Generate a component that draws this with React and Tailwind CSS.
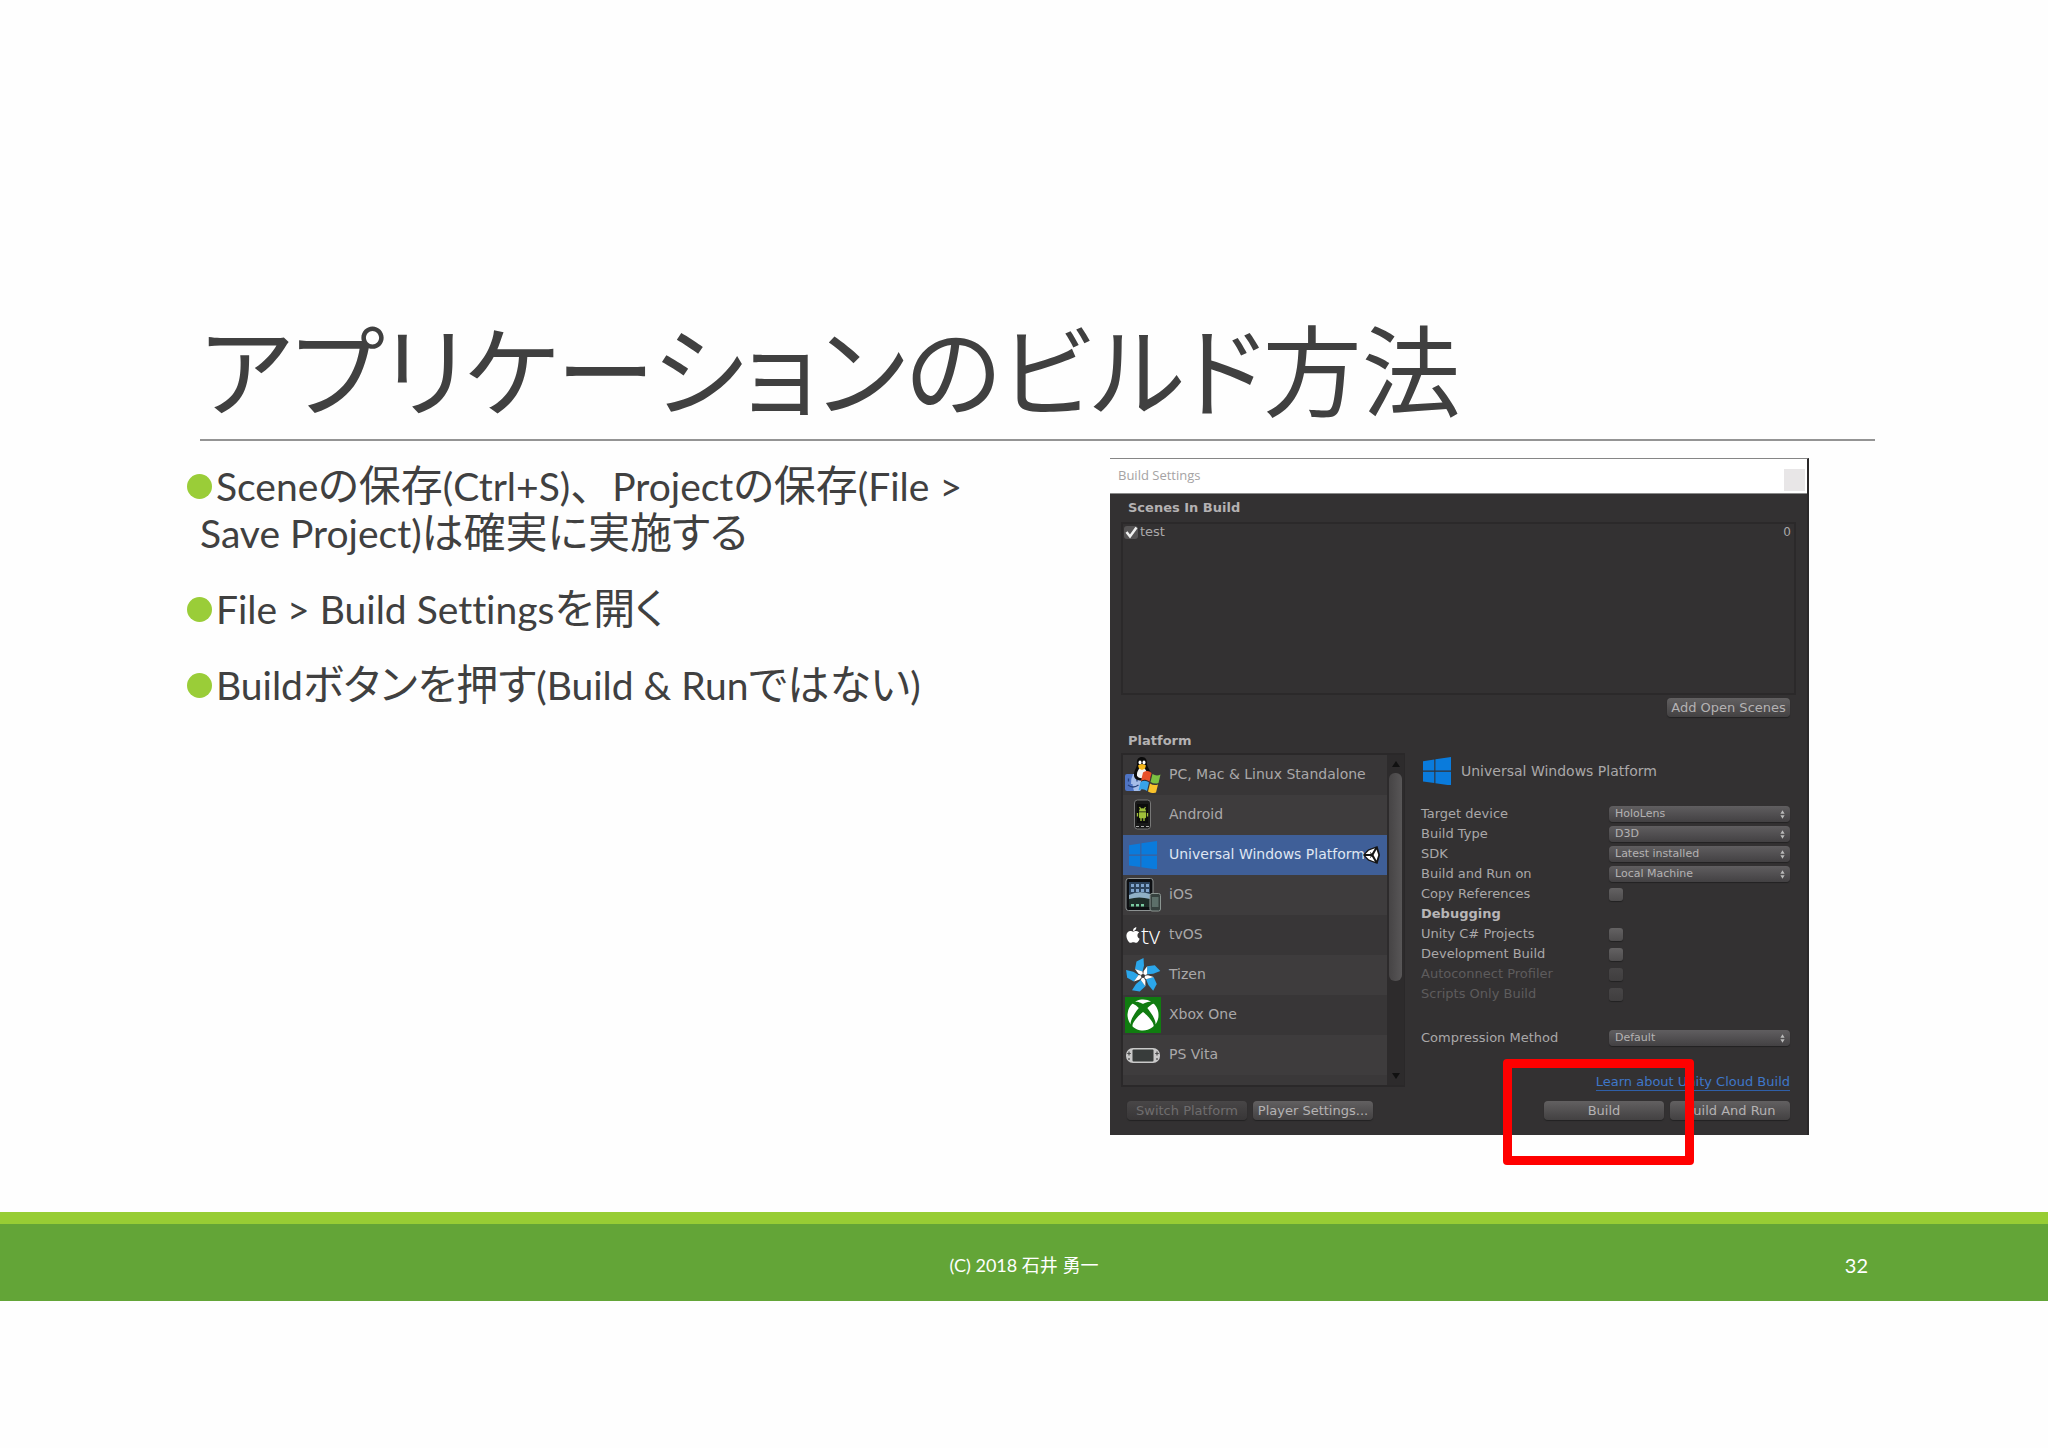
import React from "react";
import { FaApple, FaXbox } from "react-icons/fa";

const latin = "font-['Lato','Noto_Sans_CJK_JP',sans-serif]";
const unity = "font-['DejaVu_Sans','Noto_Sans_CJK_JP',sans-serif]";

function Jp({ children, wide }) {
  return (
    <span
      className={`font-['Noto_Sans_CJK_JP',sans-serif] text-[42px] leading-none ${
        wide ? "[font-feature-settings:normal]" : "[font-feature-settings:'palt']"
      }`}
    >
      {children}
    </span>
  );
}

function WindowsLogo({ className }) {
  return (
    <svg viewBox="0 0 28 28" className={className} fill="#0a7bdc" aria-hidden="true">
      <path d="M0 4.2 11.3 2.4V13.6H0zM12.4 2.2 28 0V13.6H12.4zM0 14.7H11.3V26L0 24.4zM12.4 14.7H28V28.5L12.4 26.2z" />
    </svg>
  );
}

function DesktopIcon() {
  return (
    <svg viewBox="0 0 36 36" className="h-9 w-9" aria-hidden="true">
      <rect x="0" y="17" width="16" height="17" rx="2" fill="#4f74c4" />
      <path d="M8 17h6a2 2 0 0 1 2 2v13a2 2 0 0 1-2 2H9q-1.500-5-1.500-7H6Q6 21 8 17z" fill="#a5bce8" />
      <path d="M3.500 21.500v3M12 21.500v3M3 28q5 4 10.500 0" stroke="#24407c" strokeWidth="1.300" fill="none" />
      <path d="M17 0c-4 0-5.500 3-5 7 .2 3-3 6-3 11 0 4 3 5.500 8 5.500s9-1 9-5c0-5-4-8-4-11.500C22 3 21 0 17 0z" fill="#0a0a0a" />
      <path d="M16.500 9.500c-2 1-5 5-4.500 9 .4 3 8 4 10 0 1-4-2.500-8-5.500-9z" fill="#f2f2f2" />
      <ellipse cx="15" cy="5.500" rx="1.500" ry="2" fill="#fff" />
      <ellipse cx="19" cy="5.500" rx="1.500" ry="2" fill="#fff" />
      <path d="M13 8.500q4-3 8 0l-1 3-3 1.500-3-1.500z" fill="#f6b81a" />
      <path d="M18 15.500q5-3 8.500.5l-2 8.500q-4-3-8.500-.5z" fill="#e8502a" />
      <path d="M27.500 17q4 2.500 8 .5l-2 8.500q-4 1.500-8-1z" fill="#7cc142" />
      <path d="M15.500 25q4.500-2.500 8.500.5l-2 8.500q-4-3-8.500-.5z" fill="#38a3e8" />
      <path d="M25 26.500q4 2.500 8 1l-2 8q-4 1.500-8-1z" fill="#f9c22b" />
    </svg>
  );
}

function AndroidIcon() {
  return (
    <svg viewBox="0 0 36 36" className="h-9 w-9" aria-hidden="true">
      <rect x="9.500" y="3" width="16" height="29" rx="3" fill="#191919" stroke="#777" />
      <rect x="12" y="7" width="11" height="19" fill="#0c0c0c" />
      <path d="M14 14.500a3.500 3.200 0 0 1 7 0zM14 15.300h7v5a1 1 0 0 1-1 1h-5a1 1 0 0 1-1-1z" fill="#a0c03a" />
      <path d="M12.500 16v3.500M22.500 16v3.500M16 21v3M19 21v3M14.500 10l1.200 2M20.500 10l-1.200 2" stroke="#a0c03a" strokeWidth="1.300" />
      <path d="M11 29.500h3M16 29.500h3M21 29.500h3" stroke="#aaa" />
    </svg>
  );
}

function IosIcon() {
  return (
    <svg viewBox="0 0 36 36" className="h-9 w-9" aria-hidden="true">
      <rect x="1" y="1.500" width="27" height="32" rx="2.500" fill="#0d0f12" stroke="#8d9292" />
      <rect x="4" y="5" width="21" height="25" fill="#2c435c" />
      <path d="M4 18q10-5 21-1v7H4z" fill="#8fb0c6" />
      <path d="M4 22q10-3 21 0v8H4z" fill="#1d2c28" />
      <g fill="#7fa4cc">
        <path d="M6 7h3v3H6zM11 7h3v3h-3zM16 7h3v3h-3zM21 7h3v3h-3zM6 12h3v3H6zM11 12h3v3h-3zM16 12h3v3h-3zM21 12h3v3h-3z" />
      </g>
      <path d="M6 27h3v2.500H6zM11 27h3v2.500h-3zM16 27h3v2.500h-3z" fill="#79c9a0" />
      <rect x="25" y="16.500" width="10.500" height="17.500" rx="2" fill="#36413e" stroke="#8b9591" />
      <rect x="27" y="20" width="6.500" height="10" fill="#5c6f69" />
    </svg>
  );
}

function TvosIcon() {
  return (
    <span className="flex h-9 w-9 items-center text-white" aria-hidden="true">
      <FaApple className="h-[18px] w-4 shrink-0" />
      <span className="font-['Open_Sans',sans-serif] text-2xl leading-none font-light">tv</span>
    </span>
  );
}

function TizenIcon() {
  return (
    <svg viewBox="0 0 36 36" className="h-9 w-9" aria-hidden="true">
      {[0, 72, 144, 216, 288].map((a) => (
        <g key={a} transform={`rotate(${a} 18 19)`}>
          <path d="M18.500 1 11.500 4.500 10 12l7.500 2.500 1.500-6z" fill="#2ba6ea" />
          <path d="M10 12l3.500 4.800L18 19l-.5-4.500z" fill="#fff" />
        </g>
      ))}
      <circle cx="18" cy="19" r="2" fill="#383637" />
    </svg>
  );
}

function XboxIcon() {
  return (
    <span className="flex h-9 w-9 items-center justify-center bg-[#107c10]" aria-hidden="true">
      <FaXbox className="h-8 w-8 text-white" />
    </span>
  );
}

function VitaIcon() {
  return (
    <svg viewBox="0 0 36 36" className="h-9 w-9" aria-hidden="true">
      <rect x="1" y="11" width="34" height="15" rx="7" fill="#c9c9c9" />
      <rect x="7.500" y="12.500" width="21" height="12" rx="1" fill="#383c3b" />
      <path d="M4 14.500v4M2.200 16.500h3.600M4 21v2M32 14.500v4M30.200 16.500h3.600M32 21v2" stroke="#4a4a4a" strokeWidth="1.200" />
    </svg>
  );
}

function UnityIcon() {
  return (
    <svg viewBox="0 0 18 20" className="h-5 w-[18px]" aria-hidden="true">
      <path d="M0 10 5 4.500 14.500 1 17 10l-2.500 9L5 15.500z" fill="#151515" />
      <path d="M2.500 9 6 5.500 12 3.300 8.500 9zM2.500 11 6 14.500l6 2.200L8.500 11zM13.500 4.500 15.300 10l-1.800 5.500L10.500 10z" fill="#fff" />
      <path d="M7 7.500 9.800 10 7 12.500" stroke="#151515" strokeWidth="1" fill="none" />
    </svg>
  );
}

const platforms = [
  { name: "PC, Mac & Linux Standalone", icon: <DesktopIcon /> },
  { name: "Android", icon: <AndroidIcon /> },
  { name: "Universal Windows Platform", icon: <WindowsLogo className="mx-1 h-7 w-7" />, selected: true },
  { name: "iOS", icon: <IosIcon /> },
  { name: "tvOS", icon: <TvosIcon /> },
  { name: "Tizen", icon: <TizenIcon /> },
  { name: "Xbox One", icon: <XboxIcon /> },
  { name: "PS Vita", icon: <VitaIcon /> },
];

function PanelButton({ children, className = "", disabled }) {
  return (
    <button
      type="button"
      disabled={disabled}
      className={`h-[19px] rounded-[4px] text-center text-[13px] leading-[18px] whitespace-nowrap shadow-[0_1px_1px_#222] ${
        disabled
          ? "bg-linear-to-b from-[#484647] to-[#383637] text-[#6f6d6e]"
          : "bg-linear-to-b from-[#626061] to-[#434142] text-[#b4b2b3]"
      } ${className}`}
    >
      {children}
    </button>
  );
}

function SelectRow({ id, label, value }) {
  return (
    <div className="flex h-5 items-center">
      <label htmlFor={id} className="flex-1 text-[13px] leading-5">{label}</label>
      <div className="relative flex w-[181px]">
        <select
          id={id}
          defaultValue={value}
          className="h-4 w-full appearance-none rounded-[4px] bg-linear-to-b from-[#605e60] to-[#434143] pl-[6px] text-[11px] leading-4 text-[#b4b2b3] shadow-[0_1px_1px_#222]"
        >
          <option>{value}</option>
        </select>
        <svg viewBox="0 0 6 10" className="pointer-events-none absolute top-1 right-[5px] h-[9px] w-[5px]" fill="#bbb" aria-hidden="true">
          <path d="M3 0 5.500 4h-5zM3 10 .5 6h5z" />
        </svg>
      </div>
    </div>
  );
}

function CheckRow({ id, label, disabled }) {
  return (
    <div className="flex h-5 items-center">
      <label htmlFor={id} className={`flex-1 text-[13px] leading-5 ${disabled ? "text-[#5e5c5d]" : ""}`}>{label}</label>
      <div className="flex w-[181px]">
        <input
          id={id}
          type="checkbox"
          disabled={disabled}
          className="h-[13px] w-[14px] appearance-none rounded-[3px] bg-linear-to-b from-[#646263] to-[#4e4c4d] shadow-[0_1px_1px_#222] disabled:from-[#484647] disabled:to-[#403e3f]"
        />
      </div>
    </div>
  );
}

function BuildSettings() {
  return (
    <section aria-label="Build Settings" className={`relative border-t border-r-2 border-t-[#858585] border-r-[#2a2829] bg-[#333132] text-[#aaa8a9] ${unity}`}>
      <header className="flex h-[35px] items-center justify-between border-b border-[#8a8a8a] bg-white pr-[2px] pl-2">
        <h2 className="font-['Open_Sans',sans-serif] text-[13px] text-[#a5a3a4]">Build Settings</h2>
        <button type="button" aria-label="Close" className="mt-2 h-[22px] w-[21px] bg-[#e8e6e7]" />
      </header>

      <div className="px-[11px]">
        <h3 className="h-7 pl-[7px] text-[13px] leading-[28px] font-bold text-[#b4b2b3]">Scenes In Build</h3>
        <div className="flex h-[173px] items-start justify-between border-2 border-[#2b292a] pr-[3px] pl-px">
          <label className="flex items-center gap-[2px] text-[13px] leading-4">
            <span className="relative flex">
              <input type="checkbox" defaultChecked className="h-[13px] w-[14px] appearance-none rounded-[3px] bg-[#555354]" />
              <svg viewBox="0 0 14 13" className="pointer-events-none absolute inset-0 h-[13px] w-[14px]" fill="none" stroke="#f0f0f0" strokeWidth="2.500" aria-hidden="true">
                <path d="M2.500 6 6 10.500 12.500 1.500" />
              </svg>
            </span>
            test
          </label>
          <span className="text-xs leading-4">0</span>
        </div>
        <div className="mt-[3px] flex justify-end pr-[6px]">
          <PanelButton className="w-[123px]">Add Open Scenes</PanelButton>
        </div>

        <h3 className="mt-[15px] h-[21px] pl-[7px] text-[13px] leading-[18px] font-bold text-[#b4b2b3]">Platform</h3>
        <div className="flex">
          <div className="flex h-[334px] w-[284px] shrink-0 border-2 border-r border-[#2a2829] bg-[#3a3839]">
            <ul className="flex-1 overflow-hidden">
              {platforms.map((p, i) => (
                <li
                  key={p.name}
                  className={`relative flex h-10 items-center gap-2 pl-[2px] text-sm whitespace-nowrap ${
                    p.selected ? "bg-[#3f5f98] text-[#dfe6f2]" : i % 2 ? "bg-[#3e3c3d]" : "bg-[#383637]"
                  }`}
                >
                  {p.icon}
                  <span className="pb-[2px]">{p.name}</span>
                  {p.selected && (
                    <span className="absolute top-[10px] right-[6px]">
                      <UnityIcon />
                    </span>
                  )}
                </li>
              ))}
            </ul>
            <div className="flex w-[17px] flex-col items-center bg-[#2d2b2c]" aria-hidden="true">
              <svg viewBox="0 0 8 6" className="my-[6px] h-[6px] w-2" fill="#111"><path d="M4 0 8 6H0z" /></svg>
              <div className="h-[208px] w-[13px] rounded-[6px] bg-linear-to-r from-[#464445] to-[#585657]" />
              <div className="flex-1" />
              <svg viewBox="0 0 8 6" className="my-[6px] h-[6px] w-2" fill="#111"><path d="M4 6 8 0H0z" /></svg>
            </div>
          </div>

          <div className="flex flex-1 flex-col pr-[6px] pl-4">
            <div className="flex h-[51px] items-start gap-[10px] pt-1 pl-[2px]">
              <WindowsLogo className="h-7 w-7" />
              <h4 className="text-sm leading-[28px]">Universal Windows Platform</h4>
            </div>
            <SelectRow id="target" label="Target device" value="HoloLens" />
            <SelectRow id="type" label="Build Type" value="D3D" />
            <SelectRow id="sdk" label="SDK" value="Latest installed" />
            <SelectRow id="run" label="Build and Run on" value="Local Machine" />
            <CheckRow id="copy" label="Copy References" />
            <h5 className="h-5 text-[13px] leading-5 font-bold text-[#b8b6b7]">Debugging</h5>
            <CheckRow id="csharp" label="Unity C# Projects" />
            <CheckRow id="dev" label="Development Build" />
            <CheckRow id="auto" label="Autoconnect Profiler" disabled />
            <CheckRow id="scripts" label="Scripts Only Build" disabled />
            <div className="mt-6">
              <SelectRow id="compression" label="Compression Method" value="Default" />
            </div>
            <div className="mt-auto -mb-1 flex justify-end">
              <a href="#cloud-build" className="border-b border-[#2f5fa8] text-[13px] leading-4 whitespace-nowrap text-[#3f77c9]">Learn about Unity Cloud Build</a>
            </div>
          </div>
        </div>

        <div className="flex gap-[6px] pt-[14px] pr-[6px] pb-[15px] pl-[6px]">
          <PanelButton className="w-[120px]" disabled>Switch Platform</PanelButton>
          <PanelButton className="w-[120px]">Player Settings...</PanelButton>
          <div className="flex-1" />
          <PanelButton className="w-[120px]">Build</PanelButton>
          <PanelButton className="w-[120px]">Build And Run</PanelButton>
        </div>
      </div>

      <div className="pointer-events-none absolute right-[113px] -bottom-[30px] h-[106px] w-[191px] rounded-[4px] border-[9px] border-[#ff0000]" />
    </section>
  );
}

function Bullet({ children }) {
  return (
    <li className="flex items-start text-[39px] leading-[46px] whitespace-nowrap">
      <span className="mt-3 h-[25px] w-[25px] shrink-0 rounded-full bg-[#9acd38]" aria-hidden="true" />
      <p className="-ml-3 indent-[16px] [font-variant-ligatures:none]">{children}</p>
    </li>
  );
}

export default function App() {
  return (
    <div className={`min-h-screen bg-[#fefefe] text-[#404040] ${latin}`}>
      <main className="pt-[300px]">
        <h1 className="mr-[173px] ml-[200px] h-[141px] border-b-2 border-[#949494] font-['Noto_Sans_CJK_JP',sans-serif] text-[99px] leading-[133px] font-normal whitespace-nowrap [font-feature-settings:'palt']">
          アプリケーションのビルド方法
        </h1>
        <div className="mt-[17px] mr-[239px] ml-[187px] grid grid-cols-[923fr_699fr] items-start">
          <ul className="flex flex-col gap-[29px] pt-1">
            <Bullet>
              Scene<Jp>の保存</Jp>(Ctrl+S)<Jp wide>、</Jp>Project<Jp>の保存</Jp>(File &gt;
              <br />
              Save Project)<Jp>は確実に実施する</Jp>
            </Bullet>
            <Bullet>
              File &gt; Build Settings<Jp>を開く</Jp>
            </Bullet>
            <Bullet>
              Build<Jp>ボタンを押す</Jp>(Build &amp; Run<Jp>ではない</Jp>)
            </Bullet>
          </ul>
          <BuildSettings />
        </div>
      </main>
      <footer className="mt-[77px] grid h-[89px] grid-cols-[1fr_auto_1fr] items-center border-t-[12px] border-[#97cd34] bg-[#63a537] pt-1 text-white">
        <p className="col-start-2 text-lg">(C) 2018 石井 勇一</p>
        <p className="mr-[180px] text-right text-xl">32</p>
      </footer>
    </div>
  );
}
